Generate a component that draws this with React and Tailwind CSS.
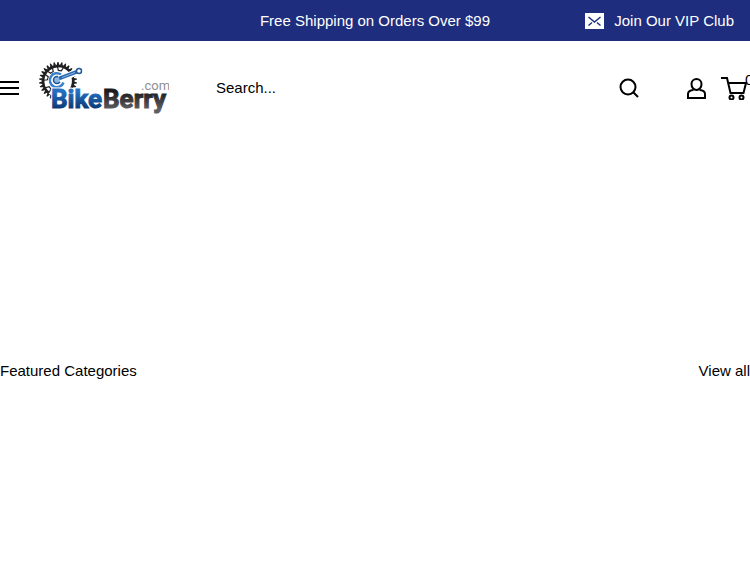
import { useState } from "react";

const teeth = Array.from({ length: 30 }, (_, i) => i * 12);
const spokes = [10, 230, 285, 325];

function Logo() {
  return (
    <svg className="block h-13 w-[130px]" viewBox="0 0 130 52" fontFamily="Roboto, Arial, sans-serif">
      <defs>
        <linearGradient id="blue" x1="0" y1="0" x2="0" y2="1">
          <stop offset="0.25" stopColor="#2370c0" />
          <stop offset="0.8" stopColor="#0b3a78" />
        </linearGradient>
        <linearGradient id="dark" x1="0" y1="0" x2="0" y2="1">
          <stop offset="0.25" stopColor="#1b1b1d" />
          <stop offset="0.85" stopColor="#5d5e62" />
        </linearGradient>
      </defs>

      {/* Chainring */}
      <g transform="translate(19 19)" stroke="#1f1f21" fill="none">
        {teeth.map((angle) =>
          angle > 115 && angle < 165 ? null : (
            <path
              key={angle}
              d="M-1.500 -15.500 L-0.500 -19 L0.500 -19 L1.500 -15.500 Z"
              fill="#1f1f21"
              stroke="none"
              transform={`rotate(${angle})`}
            />
          )
        )}
        <path d="M11 10.500A15 15 0 1 0 -9 12" strokeWidth="2.500" />
        {spokes.map((angle) => (
          <path
            key={angle}
            d="M-3 -14 L-1.500 -10.500 L1.500 -10.500 L3 -14"
            strokeWidth="1.200"
            transform={`rotate(${angle})`}
          />
        ))}
      </g>

      {/* Crank arm */}
      <circle cx="18" cy="18" r="8.500" fill="#fff" />
      <path d="M22 12.500a7 7 0 1 0 2.500 8" fill="none" stroke="#3b7fc8" strokeWidth="2.500" />
      <circle cx="18" cy="18" r="3.500" fill="#8db6e2" stroke="#1d5698" strokeWidth="1.500" />
      <path d="M19 14 L38 6.500 L42 12 L21 20.500 Z" fill="#fff" />
      <path d="M20 16.500 L38.500 9.500" stroke="#2a68b0" strokeWidth="3.500" />
      <path d="M23 15.500 L36 10.500" stroke="#8db6e2" strokeWidth="1" />
      <circle cx="40" cy="9" r="2.500" fill="#fff" stroke="#24589a" strokeWidth="1.500" />

      <g fontSize="26" fontWeight="700">
        <text x="12" y="46" stroke="#fff" strokeWidth="3" strokeLinejoin="round">Bike</text>
        <text x="12" y="46" fill="url(#blue)" stroke="url(#blue)" strokeWidth="1">Bike</text>
        <text x="64" y="46" fill="url(#dark)" stroke="url(#dark)" strokeWidth="1">Berry</text>
      </g>
      <text x="102" y="28" fontSize="13" fill="#8f9093">.com</text>
    </svg>
  );
}

function SearchIcon() {
  return (
    <svg className="h-5 w-5" viewBox="0 0 20 20" fill="none" stroke="currentColor" strokeWidth="2">
      <circle cx="9" cy="9" r="7.500" />
      <path d="M14 14l5 5" />
    </svg>
  );
}

function AccountIcon() {
  return (
    <svg className="h-[22px] w-5" viewBox="0 0 20 22" fill="none" stroke="currentColor" strokeWidth="2">
      <path d="M9.500 13C6.500 13 4.500 10 4.500 7a5 5 0 0 1 10 0c0 3-2 6-5 6Z" />
      <path d="M6.500 13C3 13.300 1 14.500 1 17v4h17v-4c0-2.500-2-3.700-5.500-4" />
    </svg>
  );
}

function CartIcon() {
  return (
    <svg className="h-6 w-[29px]" viewBox="0 0 29 24" fill="none" stroke="currentColor" strokeWidth="2">
      <path d="M0 2h6l3.500 15h13L25 7H7.500" />
      <circle cx="10.500" cy="21.500" r="2" />
      <circle cx="20.500" cy="21.500" r="2" />
    </svg>
  );
}

function MailIcon() {
  return (
    <svg className="h-4 w-[19px]" viewBox="0 0 19 16">
      <path d="M0 0h19v16H0z" fill="#fff" />
      <path
        d="M3.500 4l6 5 6-5M3.500 12.500l3.500-3M15.500 12.500l-3.500-3"
        fill="none"
        stroke="#1e2d7d"
        strokeWidth="1.500"
      />
    </svg>
  );
}

export default function App() {
  const [query, setQuery] = useState("");

  return (
    <div className="min-h-screen overflow-x-hidden bg-white font-['Liberation_Sans',Arial,sans-serif] text-[15px] leading-6 text-black">
      {/* Announcement bar */}
      <div className="grid h-[41px] grid-cols-[1fr_auto_1fr] items-center bg-[#1e2d7d] text-white">
        <p className="col-start-2">Free Shipping on Orders Over $99</p>
        <button type="button" className="mr-4 flex items-center gap-2.5 justify-self-end">
          <MailIcon />
          Join Our VIP Club
        </button>
      </div>

      <header className="flex h-[94px] items-center">
        <button type="button" aria-label="Menu" className="flex shrink-0 flex-col gap-1">
          <span className="h-0.5 w-[19px] bg-black" />
          <span className="h-0.5 w-[19px] bg-black" />
          <span className="h-0.5 w-[19px] bg-black" />
        </button>
        <a href="/" aria-label="BikeBerry.com" className="ml-5 shrink-0">
          <Logo />
        </a>
        <form className="ml-[47px] flex flex-1 items-center" onSubmit={(e) => e.preventDefault()}>
          <input
            type="text"
            aria-label="Search"
            placeholder="Search..."
            value={query}
            onChange={(e) => setQuery(e.target.value)}
            className="min-w-0 flex-1 outline-none placeholder:text-black"
          />
          <button type="submit" aria-label="Search">
            <SearchIcon />
          </button>
        </form>
        <a href="/account" aria-label="Account" className="ml-12 shrink-0">
          <AccountIcon />
        </a>
        <a href="/cart" aria-label="Cart" className="relative ml-3.5 w-[29px] shrink-0">
          <CartIcon />
          <span className="absolute -top-2 left-6">0</span>
        </a>
      </header>

      <section className="mt-56 flex items-center justify-between">
        <h2>Featured Categories</h2>
        <a href="/collections">View all</a>
      </section>
    </div>
  );
}
